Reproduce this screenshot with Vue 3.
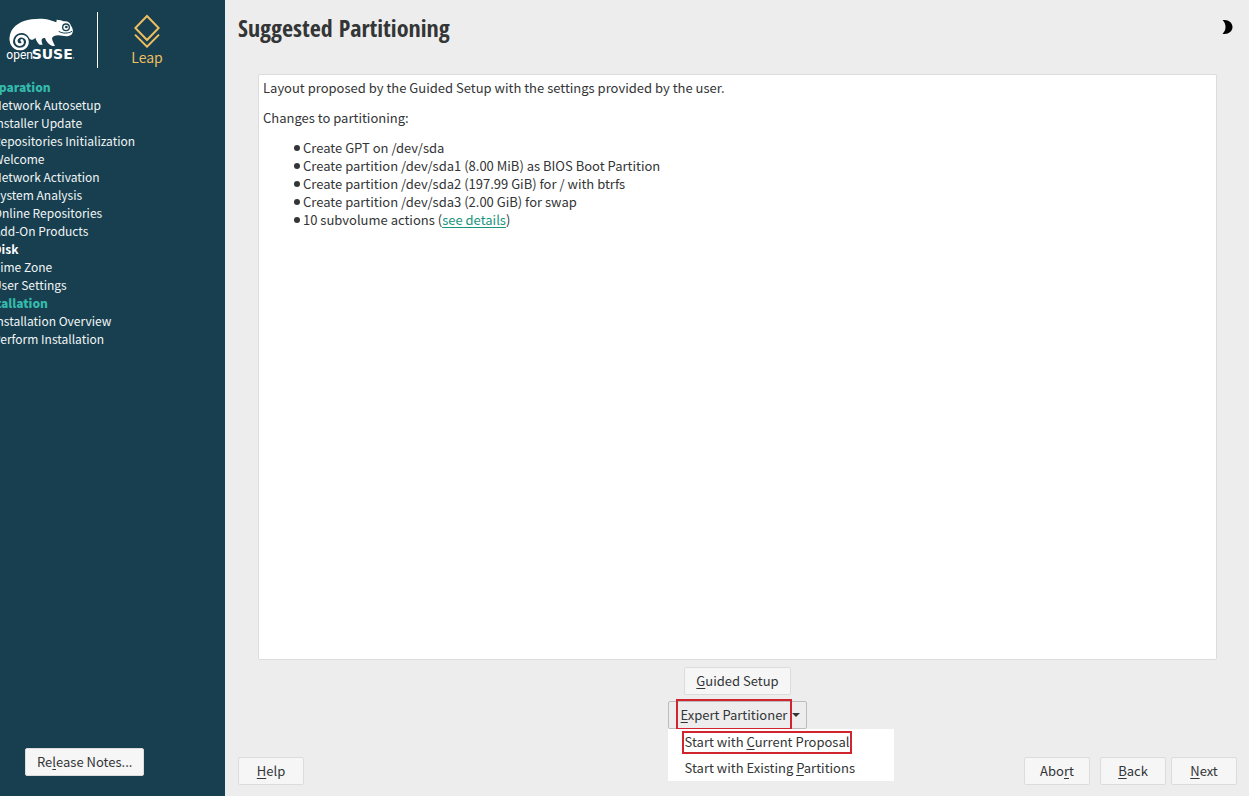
<script setup>
import { ref } from 'vue'

const stages = [
  {
    title: 'Preparation',
    steps: [
      'Network Autosetup',
      'Installer Update',
      'Repositories Initialization',
      'Welcome',
      'Network Activation',
      'System Analysis',
      'Online Repositories',
      'Add-On Products',
      'Disk',
      'Time Zone',
      'User Settings',
    ],
  },
  { title: 'Installation', steps: ['Installation Overview', 'Perform Installation'] },
]
const current = 'Disk'

const actions = [
  'Create GPT on /dev/sda',
  'Create partition /dev/sda1 (8.00 MiB) as BIOS Boot Partition',
  'Create partition /dev/sda2 (197.99 GiB) for / with btrfs',
  'Create partition /dev/sda3 (2.00 GiB) for swap',
]

const menuOpen = ref(true)
</script>

<template>
  <div class="installer">
    <aside class="sidebar">
      <div class="brand">
        <svg class="suse" viewBox="0 0 228 189" role="img" aria-label="openSUSE">
          <path fill="#fff" d="M29 116C28 92 46 72 72 63C94 56 126 54 146 59C154 61 162 64 169 67L170 59C179 60 186 61 190 64C202 62 211 68 213 77C220 87 221 98 213 105C201 112 188 107 175 106C165 106 158 109 156 115C157 124 162 131 165 138L157 138C147 134 139 126 135 114C128 113 124 117 125 123C125 128 127 131 128 134L119 134C113 129 109 122 106 113C99 122 91 121 87 113C80 97 57 94 45 108C39 116 37 127 42 139C33 134 29 126 29 116Z" />
          <path class="tail" d="M35 106C28 126 39 147 59 147C75 147 84 136 82 122C79 108 61 104 52 114C45 123 50 134 60 134C68 134 71 126 65 121" />
          <circle cx="198" cy="82" r="10" fill="#fff" stroke="#173f4f" stroke-width="4" />
          <circle cx="199" cy="81" r="4" fill="#173f4f" />
          <path d="M176 94C188 101 204 101 216 94" fill="none" stroke="#173f4f" stroke-width="3" />
          <text class="open" x="19" y="176">open</text>
          <text class="bold" x="95" y="176">SUSE</text>
          <circle cx="221" cy="174" r="2" fill="#9fb2ba" />
        </svg>
        <span class="rule"></span>
        <div class="leap">
          <svg viewBox="0 0 78 102" aria-hidden="true">
            <path d="M39 6L74 42L39 78L4 42ZM3 62L39 98L75 62" />
          </svg>
          <span>Leap</span>
        </div>
      </div>

      <nav class="stages" aria-label="Installation steps">
        <section v-for="stage in stages" :key="stage.title">
          <h2>{{ stage.title }}</h2>
          <ol>
            <li v-for="step in stage.steps" :key="step" :class="{ current: step === current }">{{ step }}</li>
          </ol>
        </section>
      </nav>

      <button class="btn notes" type="button">Re<u>l</u>ease Notes...</button>
    </aside>

    <main class="main">
      <header class="head">
        <h1>Suggested Partitioning</h1>
        <button class="theme" type="button" aria-label="Toggle theme">
          <svg viewBox="0 0 30 42" aria-hidden="true"><path d="M0 1C15-3 30 7 30 21C30 35 15 45 0 41C12 32 12 10 0 1Z" /></svg>
        </button>
      </header>

      <article class="proposal">
        <p>Layout proposed by the Guided Setup with the settings provided by the user.</p>
        <p>Changes to partitioning:</p>
        <ul>
          <li v-for="action in actions" :key="action">{{ action }}</li>
          <li>10 subvolume actions (<a href="#details">see details</a>)</li>
        </ul>
      </article>

      <div class="choices">
        <button class="btn guided" type="button"><u>G</u>uided Setup</button>
        <div class="expert">
          <button class="btn drop" type="button" :aria-expanded="menuOpen" @click="menuOpen = !menuOpen">
            <span class="marked"><u>E</u>xpert Partitioner</span>
            <span class="arrow"></span>
          </button>
          <div v-if="menuOpen" class="menu" role="menu">
            <button type="button" role="menuitem"><span class="marked">Start with <u>C</u>urrent Proposal</span></button>
            <button type="button" role="menuitem">Start with Existing <u>P</u>artitions</button>
          </div>
        </div>
      </div>

      <footer class="foot">
        <button class="btn" type="button"><u>H</u>elp</button>
        <div class="steps">
          <button class="btn abort" type="button">Abo<u>r</u>t</button>
          <button class="btn" type="button"><u>B</u>ack</button>
          <button class="btn" type="button"><u>N</u>ext</button>
        </div>
      </footer>
    </main>
  </div>
</template>

<style>
body {
  margin: 0;
}
</style>

<style scoped>
.installer {
  display: flex;
  min-height: 100vh;
  background: #ededed;
  color: #333536;
  font: 13px/18px "Noto Sans CJK SC", "Noto Sans", sans-serif;
}
button {
  font: inherit;
  color: inherit;
}
u {
  text-underline-offset: 2px;
  text-decoration-thickness: 1px;
}
.btn {
  box-sizing: border-box;
  min-width: 66px;
  height: 28px;
  padding: 0 11px;
  border: 1px solid #dcdcdc;
  border-radius: 2px;
  background: #f6f6f6;
  white-space: nowrap;
}

.sidebar {
  display: flex;
  flex: 0 0 225px;
  flex-direction: column;
  box-sizing: border-box;
  padding-bottom: 20px;
  overflow: hidden;
  background: #173f4f;
  color: #f2f5f6;
}
.brand {
  display: flex;
  height: 78px;
}
.suse {
  flex: none;
  width: 76px;
  height: 63px;
}
.tail {
  fill: none;
  stroke: #fff;
  stroke-width: 8;
  stroke-linecap: round;
}
.open,
.bold {
  fill: #fff;
}
.open {
  font: 36px Roboto, sans-serif;
}
.bold {
  font: bold 42px "DejaVu Sans", sans-serif;
}
.rule {
  width: 1px;
  height: 56px;
  margin: 12px 0 0 21px;
  background: #fff;
}
.leap {
  display: flex;
  flex-direction: column;
  align-items: center;
  width: 98px;
  padding-top: 14px;
  color: #eebe60;
  font-size: 14px;
  line-height: 18px;
}
.leap svg {
  width: 26px;
  height: 34px;
}
.leap path {
  fill: none;
  stroke: #eebe60;
  stroke-width: 6;
}
.stages {
  flex: 1;
  margin-left: -22px;
  font-size: 12px;
  white-space: nowrap;
}
.stages h2 {
  margin: 0;
  color: #35b9ab;
  font-size: 12px;
  font-weight: 900;
  line-height: 18px;
}
.stages ol {
  margin: 0;
  padding-left: 15px;
  list-style: none;
}
.current {
  color: #fff;
  font-weight: bold;
}
.notes {
  align-self: flex-start;
  margin-left: 25px;
  color: #333536;
}

.main {
  display: flex;
  flex: 1;
  flex-direction: column;
  min-width: 0;
  box-sizing: border-box;
  padding: 0 12px 11px;
  border-left: 1px solid #e0f0f7;
}
.head {
  display: flex;
  align-items: flex-start;
  justify-content: space-between;
  height: 74px;
}
h1 {
  margin: 12px 0 0;
  font: bold 24px/32px "Open Sans Condensed", "Liberation Sans Narrow", "DejaVu Sans Condensed", sans-serif;
}
.theme {
  margin: 20px 4px 0 0;
  padding: 0;
  border: 0;
  background: none;
}
.theme svg {
  display: block;
  width: 11px;
  height: 14px;
}
.theme path {
  fill: #000;
}
.proposal {
  flex: 1;
  margin: 0 20px;
  padding: 4px;
  border: 1px solid #dcdcdc;
  border-radius: 2px;
  background: #fff;
}
.proposal p {
  margin: 0 0 12px;
}
.proposal ul {
  margin: 0;
  padding: 0 0 0 40px;
  list-style: none;
}
.proposal li::before {
  content: "";
  float: left;
  width: 6px;
  height: 6px;
  margin: 6px 0 0 -9px;
  border-radius: 50%;
  background: #333536;
}
.proposal a {
  color: #1a9480;
  text-underline-offset: 2px;
}
.choices {
  display: flex;
  flex-direction: column;
  align-items: center;
  gap: 6px;
  padding: 7px 0 28px;
}
.expert {
  position: relative;
}
.drop {
  display: flex;
  align-items: center;
  gap: 5px;
  padding: 0 6px 0 12px;
  border-color: #bcbcbc;
  background: #ededed;
}
.marked {
  position: relative;
}
.marked::after {
  position: absolute;
  inset: -1px -3px -3px;
  border: 2px solid #d0252f;
  content: "";
}
.drop .marked::after {
  inset: -7px -5px -6px;
}
.arrow {
  border: 4px solid transparent;
  border-top-color: #333536;
  border-bottom-width: 0;
}
.menu {
  position: absolute;
  top: 100%;
  left: 0;
  z-index: 1;
  width: 226px;
  background: #fff;
}
.menu button {
  display: block;
  width: 100%;
  height: 26px;
  padding: 0 17px;
  border: 0;
  background: none;
  text-align: left;
  white-space: nowrap;
}
.foot,
.steps {
  display: flex;
  justify-content: space-between;
}
.steps {
  gap: 5px;
}
.abort {
  margin-right: 5px;
}
</style>
